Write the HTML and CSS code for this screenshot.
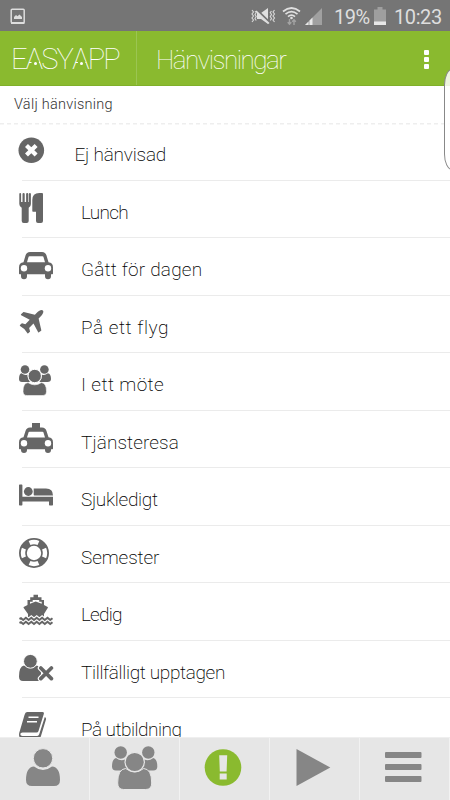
FILE: index.html
```html
<!DOCTYPE html>
<html lang="sv">
<head>
    <meta charset="UTF-8">
    <meta name="viewport" content="width=device-width, initial-scale=1.0">
    <title>Hänvisningar</title>
    <link rel="stylesheet" href="styles.css">
</head>
<body>
<div class="app">

    <!-- Status bar -->
    <div class="status">
        <svg class="status-photo" width="16" height="17" viewBox="0 0 16 17">
            <rect x="1.2" y="1.2" width="13" height="13.5" rx="1" fill="none" stroke="#dedede" stroke-width="1.5"/>
            <path d="M1 14h13.5v2H1zM4 11V9l2-2 1.5 1.2L9.5 6.500l2.500 2.500v2z" fill="#dedede"/>
        </svg>
        <svg class="status-icons" width="74" height="20" viewBox="251 6 74 20">
            <g fill="none" stroke="#d5d5d5" stroke-width="1.2">
                <path d="M253 9l1.500 2-1.500 2 1.500 2-1.500 2 1.500 2-1.500 2M256 10l1.200 1.500-1.200 2 1.200 2-1.200 2 1.200 2M272.500 10l-1.200 1.500 1.200 2-1.200 2 1.200 2-1.200 2M275.500 9l-1.500 2 1.500 2-1.500 2 1.500 2-1.500 2 1.500 2"/>
            </g>
            <path d="M258 12h4l7-5v16l-7-5h-4z" fill="#e0e0e0"/>
            <path d="M257 8.500L271 22" stroke="#757575" stroke-width="2.500"/>
            <path d="M257 10L270 22.500" stroke="#e0e0e0" stroke-width="1.500"/>
            <g fill="none" stroke="#e0e0e0" stroke-width="1.700">
                <path d="M284 10.500q8.500-7 17 0M286.500 13.200q6-5 12 0M289 15.700q3.500-3 7 0"/>
            </g>
            <circle cx="292.500" cy="17" r="1.300" fill="#e0e0e0"/>
            <path d="M290.500 18v5M288.700 21.200l1.800 2 1.800-2M295 24v-5M293.200 20.800l1.800-2 1.800 2" fill="none" stroke="#a3a3a3" stroke-width="1.400"/>
            <path d="M306 24L323 7v17z" fill="#a0a0a0"/>
            <path d="M306 24l3.500-3.500V24zM310.500 24v-4.500l3-3V24z" fill="#e8e8e8"/>
        </svg>
        <span class="battery-text">19%</span>
        <svg class="battery" width="12" height="18" viewBox="0 0 12 18">
            <path d="M0 2.500h3.500V0h5v2.500H12V18H0z" fill="#9f9f9f"/>
            <path d="M0 14.500h12V18H0z" fill="#e8e8e8"/>
        </svg>
        <span class="clock">10:23</span>
    </div>

    <!-- Header -->
    <div class="header">
        <div class="logo">E<b>A</b>SY<b>A</b>PP</div>
        <h1>Hänvisningar</h1>
        <div class="more"><i></i><i></i><i></i></div>
    </div>

    <div class="subtitle">Välj hänvisning</div>

    <ul class="list">
        <li class="first">
            <svg class="icon" viewBox="0 0 36 34">
                <circle cx="13.300" cy="17.200" r="12.800"/>
                <path d="M8.500 12.400l9.600 9.600M18.100 12.400L8.500 22" stroke="#fff" stroke-width="4.200"/>
            </svg>
            <span class="t-ej">Ej hänvisad</span>
        </li>
        <li>
            <svg class="icon" viewBox="0 0 36 34">
                <path d="M1.300 3q0-1 .9-1t.9 1v8h1.400V3q0-1 1.100-1t1.100 1v8h1.400V3q0-1 1.100-1t1.100 1v8h.600V3q0-1 1-1t1 1v10q0 2.500-2.200 3.800V30q0 2-2 2H5.700q-2 0-2-2V16.800Q1.300 15.500 1.300 13z"/>
                <path d="M25 3v27q0 2-2 2h-3q-2 0-2-2v-9.300h-3q-.7 0-.7-.7V9q0-7 7-7h2.700q1 0 1 1z"/>
            </svg>
            <span class="t-lunch">Lunch</span>
        </li>
        <li>
            <svg class="icon" viewBox="0 0 36 34">
                <path fill-rule="evenodd" d="M1 19.500q0-5 4.500-5.300L7.500 7.500q1-3.500 4.500-3.500h12q3.500 0 4.500 3.500l2 6.700Q35 14.500 35 19.500v6q0 .7-.7.700H33v2q0 3-3 3t-3-3v-2H9v2q0 3-3 3t-3-3v-2H1.700q-.7 0-.7-.7zM9 14.300h18L25.400 8.800q-.2-.5-.9-.5h-13q-.7 0-.9.500z"/>
                <circle cx="6" cy="20.200" r="3.200" fill="#fff"/><circle cx="30" cy="20.200" r="3.200" fill="#fff"/>
            </svg>
            <span class="t-dagen">Gått för dagen</span>
        </li>
        <li>
            <svg class="icon" viewBox="0 0 36 34">
                <path transform="translate(-1.400 1.700) scale(.0168)" d="M1568 160q44 52 12 148t-108 172l-161 161 160 696q5 19-12 33l-128 96q-7 6-19 6-4 0-7-1-15-3-21-16l-279-508-259 259 53 194q5 17-8 31l-96 96q-9 9-23 9h-2q-15-2-24-13l-189-252-252-189q-11-7-13-23-1-13 9-25l96-97q9-9 23-9 6 0 8 1l194 53 259-259-508-279q-14-8-17-24-2-16 9-27l128-128q14-13 30-8l665 159 160-160q76-76 172-108t148 12z"/>
            </svg>
            <span class="t-flyg">På ett flyg</span>
        </li>
        <li>
            <svg class="icon" viewBox="0 0 36 34">
                <circle cx="7" cy="6.500" r="4.300"/><circle cx="26.400" cy="6.500" r="4.300"/>
                <path d="M3.500 10.300Q7 13 9.500 11.500q0 4.500 2.500 7.500H4q-3 0-3-3 0-5 2.500-5.700zM29.900 10.300q-3.500 2.700-6 1.200 0 4.500-2.500 7.500h8q3.600 0 3.600-3 0-5-3.100-5.700z"/>
                <path d="M10 19.600q6.700 4.500 13.400 0 5.100.5 5.100 8.800 0 4.200-4.500 4.200H9.500Q5 32.600 5 28.400q0-8.300 5-8.800z" stroke="#fff" stroke-width=".6"/>
                <circle cx="16.700" cy="13" r="6.700" stroke="#fff" stroke-width="1"/>
            </svg>
            <span class="t-mote">I ett möte</span>
        </li>
        <li>
            <svg class="icon" viewBox="0 0 36 34">
                <path fill-rule="evenodd" d="M14 2h8v4.500h2q3.500 0 4.500 3.500l2 6.200Q35 16.500 35 21.500v6q0 .7-.7.700H33v.8q0 3-3 3t-3-3v-.8H9v.8q0 3-3 3t-3-3v-.8H1.700q-.7 0-.7-.7v-6q0-5 4.500-5.300L7.500 10q1-3.500 4.500-3.500h2zM9 16.500h18l-1.600-5.200q-.2-.5-.9-.5h-13q-.7 0-.9.500z"/>
                <circle cx="6" cy="22.300" r="3.200" fill="#fff"/><circle cx="30" cy="22.300" r="3.200" fill="#fff"/>
            </svg>
            <span class="t-resa">Tjänsteresa</span>
        </li>
        <li>
            <svg class="icon" viewBox="0 0 36 34">
                <path d="M1 7.200q0-.7.700-.7h2q.7 0 .7.700v11.600H35v8q0 .7-.7.700h-2.600q-.7 0-.7-.7v-3.300H4.400v3.300q0 .7-.7.700h-2q-.7 0-.7-.7zM15.700 10.500H28q7 0 7 7H16.400q-.7 0-.7-.7z"/>
                <circle cx="10.300" cy="13.500" r="4.400"/>
            </svg>
            <span class="t-sjuk">Sjukledigt</span>
        </li>
        <li>
            <svg class="icon" viewBox="0 0 36 34">
                <circle cx="16" cy="17" r="11.100" fill="none" stroke="#666" stroke-width="7.800"/>
                <circle cx="16" cy="17" r="11" fill="none" stroke="#fff" stroke-width="4.400" pathLength="360" stroke-dasharray="48 42" stroke-dashoffset="24"/>
            </svg>
            <span class="t-sem">Semester</span>
        </li>
        <li>
            <svg class="icon" viewBox="0 0 36 34">
                <path fill-rule="evenodd" d="M15.500 1.800h4.500v2.500h3.500V7H26v5l3.700 2q.5.400 0 1L26 21v3H10v-3l-4.300-6q-.4-.6 0-1L9.500 12V7h2.700V4.300h3.300zM12 8.700v2.100l5.700-2.300 6 2.300V8.700h-2.500V7h-6.500v1.700z"/>
                <path d="M1.500 24.500l1.500-.8 2.200 1.800 2.700-2.200 2.700 2.200 2.700-2.200 2.700 2.200 2.700-2.200 2.700 2.200 2.700-2.200 2.700 2.200 2.700-2.200 2.700 2.200 2.300-1.800" fill="none" stroke="#fff" stroke-width="2"/>
                <path d="M1.500 26l1.500-.8 2.200 1.800 2.700-2.200 2.700 2.200 2.700-2.200 2.700 2.200 2.700-2.200 2.700 2.200 2.700-2.200 2.700 2.200 2.700-2.200 2.700 2.200 2.300-1.800M1.500 30l1.500-.8 2.200 1.800 2.700-2.200 2.700 2.200 2.700-2.200 2.700 2.200 2.700-2.200 2.700 2.200 2.700-2.200 2.700 2.200 2.700-2.200 2.700 2.200 2.300-1.800" fill="none" stroke="#666" stroke-width="2"/>
            </svg>
            <span class="t-ledig">Ledig</span>
        </li>
        <li>
            <svg class="icon" viewBox="0 0 36 34">
                <path d="M6 14.500q6.300 5 12.600 0 3 .5 4.400 4.500v11H5q-4 0-4-4.500Q1 15.500 6 14.500z"/>
                <circle cx="12.400" cy="10.300" r="6.900" stroke="#fff" stroke-width="1"/>
                <path d="M22.800 17l10.600 10.600M33.400 17L22.800 27.600" stroke="#fff" stroke-width="6" stroke-linecap="round"/>
                <path d="M22.800 17l10.600 10.600M33.400 17L22.800 27.600" stroke="#666" stroke-width="3.700" stroke-linecap="round"/>
            </svg>
            <span class="t-upp">Tillfälligt upptagen</span>
        </li>
        <li>
            <svg class="icon" viewBox="0 0 36 34">
                <path d="M9 4h15.500q1.800 0 1.300 2l-5.300 17q-.5 1.500-2 1.500H4.500q-2 0-2.200 1.500 0 2 2.200 2h14.700q1.400 0 2-1.700L26.800 9q1.700.8 1.100 2.800l-5 16.500Q22 31 19.500 31H4.500q-3 0-3.500-4 0-2 .8-4L6.500 7Q7.300 4 9 4z"/>
                <path d="M10.500 9.300h10M9 13.800h10" stroke="#fff" stroke-width="1.600"/>
            </svg>
            <span class="t-utb">På utbildning</span>
        </li>
    </ul>

    <!-- Bottom navigation -->
    <div class="nav">
        <a><svg viewBox="0 0 90 62">
            <path d="M34 28.500q9 7 18 0 8 .5 8 13.500 0 6-6 6H32q-6 0-6-6 0-13 8-13.500z"/>
            <circle cx="43" cy="20.300" r="9.700" stroke="#e6e6e6" stroke-width="1"/>
        </svg></a>
        <a><svg viewBox="0 0 90 62">
            <circle cx="30.700" cy="14.500" r="6.200"/><circle cx="58.300" cy="14.500" r="6.200"/>
            <path d="M26 20q4.500 3.500 9 1.500 0 6 4 11H26q-4 0-4-4 0-7.500 4-8.500zM63.300 20q-4.500 3.500-9 1.500 0 6-4 11h13q4 0 4-4 0-7.500-4-8.500z"/>
            <path d="M35.700 30.500q9 7 18 0 8 .5 8 14.500 0 6.500-6 6.500h-22q-6 0-6-6.500 0-14 8-14.500z" stroke="#e6e6e6" stroke-width="1"/>
            <circle cx="44.700" cy="24" r="9.700" stroke="#e6e6e6" stroke-width="1.200"/>
        </svg></a>
        <a><svg viewBox="0 0 90 62">
            <circle cx="43" cy="29.500" r="18.300" fill="#8aba2f"/>
            <path d="M39.200 17.300h8l-.6 16.200h-6.800zM39.700 35.500h7v6h-7z" fill="#e6e6e6"/>
        </svg></a>
        <a><svg viewBox="0 0 90 62"><path d="M26.500 11L60.300 29.500 26.500 48z"/></svg></a>
        <a><svg viewBox="0 0 90 62">
            <rect x="25" y="14" width="36.500" height="6" rx="1"/><rect x="25" y="26" width="36.500" height="6" rx="1"/><rect x="25" y="38" width="36.500" height="6" rx="1"/>
        </svg></a>
    </div>

    <div class="edge"></div>
</div>
</body>
</html>
```
FILE: styles.css
```css
* { box-sizing: border-box; }
body { margin: 0; font-family: Roboto, "Liberation Sans", sans-serif; background: #fff; }
.app { position: relative; display: flex; flex-direction: column; height: 800px; width: 450px; overflow: hidden; }

.status { flex: none; height: 31px; background: #757575; display: flex; align-items: center; padding: 2px 8px 0 10px; color: #dedede; font-size: 20px; }
.status-icons { margin-left: auto; margin-right: 10px; }
.battery-text { width: 36px; letter-spacing: -0.5px; margin-right: 4px; }
.battery { margin-right: 8px; margin-top: -2px; }
.clock { width: 48px; letter-spacing: -0.4px; white-space: nowrap; }
svg { flex: none; display: block; }

.header { flex: none; height: 55px; background: #8aba2f; color: #fff; display: flex; align-items: center; border-bottom: 1px solid #80b02a; }
.logo { width: 137px; height: 54px; line-height: 57px; padding-left: 11px; font-size: 29px; font-weight: 250; letter-spacing: -1.8px; border-right: 1px solid #9bc552; }
.logo b { position: relative; font-weight: 250; }
/* the A has a dot instead of a bar */
.logo b::before { content: ""; position: absolute; left: 5px; top: 18px; width: 9px; height: 6px; background: #8aba2f; clip-path: polygon(15% 0, 85% 0, 100% 100%, 0 100%); }
.logo b::after { content: ""; position: absolute; left: 8px; top: 20px; width: 3px; height: 3px; border-radius: 50%; background: #fff; }
h1 { margin: 3px 0 0 19px; font-size: 26px; font-weight: 250; letter-spacing: -1.5px; }
.more { margin: 2px 21px 0 auto; display: grid; gap: 2px; }
.more i { width: 5px; height: 5px; background: #fff; border-radius: 1px; }

.subtitle { flex: none; height: 37px; padding-left: 14px; line-height: 38px; font-size: 14.5px; font-weight: 350; letter-spacing: 0.25px; color: #333; }

.list { flex: 1; min-height: 0; overflow: hidden; margin: 0; padding: 0; list-style: none; background: repeating-linear-gradient(90deg, #eee 0 4px, #fff 4px 7px) 0 0 / 100% 1.5px no-repeat; }
.list li { height: 57.5px; display: flex; align-items: flex-start; padding: 10px 0 0 18px; background: linear-gradient(#ebebeb, #ebebeb) 22px 100% / 100% 1px no-repeat; }
.icon { width: 36px; height: 34px; fill: #666; }
.list span { margin: 9px 0 0 27px; line-height: 26px; font-size: 19px; font-weight: 220; color: #000; white-space: nowrap; }
.list .first span { margin-left: 20.5px; }
.t-ej { letter-spacing: -0.2px; }
.t-lunch { letter-spacing: -0.7px; }
.t-dagen { letter-spacing: 0.2px; }
.t-flyg { letter-spacing: 0.55px; }
.t-mote { letter-spacing: 0.4px; }
.t-resa { letter-spacing: 0.1px; }
.t-sjuk { letter-spacing: -0.3px; }
.t-sem { letter-spacing: -0.1px; }
.t-ledig { letter-spacing: -0.8px; }
.t-upp { letter-spacing: -0.35px; }
.t-utb { letter-spacing: -0.5px; }

.nav { flex: none; height: 63px; display: grid; grid-template-columns: repeat(5, 1fr); background: #e6e6e6; border-top: 1px solid #efefef; }
.nav a { border-right: 1px solid #f2f2f2; overflow: hidden; }
.nav svg { width: 90px; height: 62px; fill: #868686; }

.edge { position: absolute; left: 444px; top: 69px; width: 20px; height: 101px; border: 1px solid #888; border-radius: 8px / 16px; background: rgba(255, 255, 255, 0.85); }
```
